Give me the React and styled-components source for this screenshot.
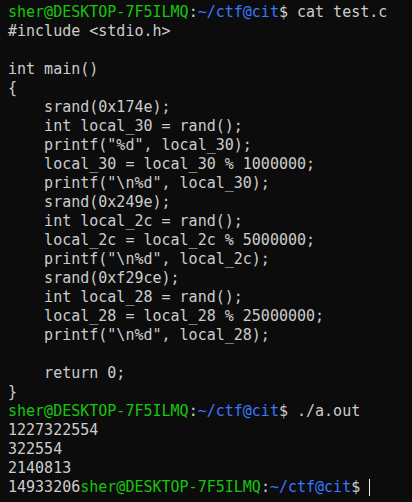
import React from 'react'
import styled, {createGlobalStyle} from 'styled-components'

const GlobalStyle = createGlobalStyle`
  html, body {
    margin: 0;
    padding: 0;
    background: #0c0c0c;
  }
`

const code = [
  '#include <stdio.h>',
  '',
  'int main()',
  '{',
  '    srand(0x174e);',
  '    int local_30 = rand();',
  '    printf("%d", local_30);',
  '    local_30 = local_30 % 1000000;',
  '    printf("\\n%d", local_30);',
  '    srand(0x249e);',
  '    int local_2c = rand();',
  '    local_2c = local_2c % 5000000;',
  '    printf("\\n%d", local_2c);',
  '    srand(0xf29ce);',
  '    int local_28 = rand();',
  '    local_28 = local_28 % 25000000;',
  '    printf("\\n%d", local_28);',
  '',
  '    return 0;',
  '}'
]

const output = ['1227322554', '322554', '2140813']

const Prompt = () => (
  <>
    <Host>sher@DESKTOP-7F5ILMQ</Host>
    <Text>:</Text>
    <Path>~/ctf@cit</Path>
    <Text>$ </Text>
  </>
)

export default () => {
  return (
    <Terminal>
      <GlobalStyle />
      <Line>
        <Prompt />
        cat test.c
      </Line>
      {code.map((l, i) => (
        <Line key={'c' + i}>{l}</Line>
      ))}
      <Line>
        <Prompt />
        ./a.out
      </Line>
      {output.map((l, i) => (
        <Line key={'o' + i}>{l}</Line>
      ))}
      <Line>
        14933206
        <Prompt />
        <Cursor />
      </Line>
    </Terminal>
  )
}
//---------------------------------------------------------------------
const Terminal = styled.div`
  width: 412px;
  height: 502px;
  box-sizing: border-box;
  padding: 3px 0 0 8px;
  background: #0c0c0c;
  color: #cccccc;
  font-family: 'DejaVu Sans Mono', 'Liberation Mono', monospace;
  font-size: 15px;
  overflow: hidden;
`
const Line = styled.div`
  height: 19px;
  line-height: 19px;
  white-space: pre;
  display: flex;
  align-items: center;
`
const Host = styled.span`
  color: #16c60c;
`
const Path = styled.span`
  color: #3b78ff;
`
const Text = styled.span`
  color: #cccccc;
`
const Cursor = styled.span`
  display: inline-block;
  width: 1px;
  height: 17px;
  background: #f2f2f2;
`
